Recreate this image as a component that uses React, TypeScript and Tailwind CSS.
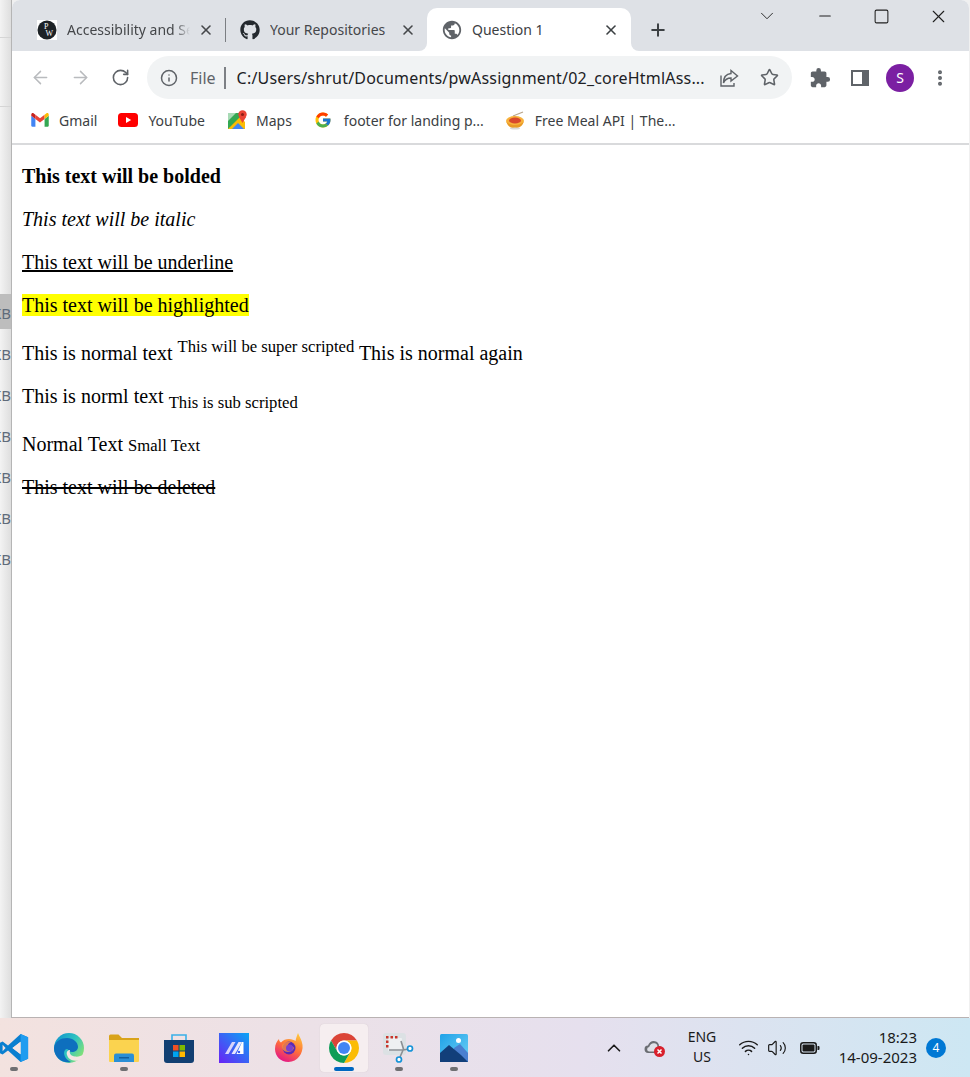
import { ArrowLeft, ArrowRight, ChevronDown, ChevronUp, Info, Minus, MoreVertical, Plus, RotateCw, Square, Star, Volume2, Wifi, X } from 'lucide-react';
import { FaGithub } from 'react-icons/fa';
import { FcGoogle } from 'react-icons/fc';
import { MdExtension, MdPublic } from 'react-icons/md';
import type { ReactNode } from 'react';

const UI_FONT = 'font-["Noto_Sans",sans-serif]';

function PwIcon() {
  return (
    <svg width="20" height="20" viewBox="0 0 20 20">
      <rect width="20" height="20" fill="#fff" />
      <circle cx="10" cy="10" r="9.5" fill="#1d2226" />
      <text x="7" y="9" fontSize="8" fill="#fff" fontFamily="Liberation Serif">P</text>
      <text x="8.5" y="16" fontSize="8" fill="#fff" fontFamily="Liberation Serif">W</text>
    </svg>
  );
}

function GmailIcon() {
  return (
    <svg width="20" height="20" viewBox="0 0 24 24">
      <path d="M1.5 20V7l5 3.8V20H3a1.5 1.5 0 0 1-1.5-1z" fill="#4285f4" />
      <path d="M17.5 20v-9.2l5-3.8v12a1 1 0 0 1-1 1z" fill="#34a853" />
      <path d="M6.5 10.8V5.6L12 10l5.500-4.400v5.200L12 15z" fill="#ea4335" />
      <path d="M17.500 5.600l2-1.500c1.400-1 3-.1 3 1.500V7l-5 3.800z" fill="#fbbc04" />
      <path d="M6.500 5.600l-2-1.500c-1.400-1-3-.1-3 1.500V7l5 3.800z" fill="#c5221f" />
    </svg>
  );
}

function YoutubeIcon() {
  return (
    <svg width="20" height="14" viewBox="0 0 20 14">
      <rect width="20" height="14" rx="3.500" fill="#f00" />
      <path d="M8 4l5.200 3L8 10z" fill="#fff" />
    </svg>
  );
}

function MapsIcon() {
  return (
    <svg width="19" height="20" viewBox="0 0 19 20">
      <path d="M0 3h12v16H0z" fill="#34a853" />
      <path d="M0 19L12 7l5 5v7z" fill="#fbbc04" />
      <path d="M4 19l6-6 6 6z" fill="#4285f4" />
      <path d="M0 3h8L0 11z" fill="#a8dab5" />
      <circle cx="14.500" cy="4.500" r="4.200" fill="#ea4335" />
      <path d="M11 7l3.500 6L18 7z" fill="#ea4335" />
      <circle cx="14.500" cy="4.500" r="1.500" fill="#8f1d15" />
    </svg>
  );
}

function MealIcon() {
  return (
    <svg width="20" height="20" viewBox="0 0 20 20">
      <path d="M8 6l10-4" stroke="#b9a58a" strokeWidth="1.200" fill="none" />
      <ellipse cx="10" cy="11" rx="9" ry="5" fill="#f7b23b" />
      <ellipse cx="10" cy="10.500" rx="6" ry="3" fill="#d9482b" />
      <path d="M1.500 12c1 4 4 6 8.500 6s7.500-2 8.500-6c-2 2-5 3-8.500 3s-6.500-1-8.500-3z" fill="#e99a25" />
      <ellipse cx="10" cy="18.500" rx="5" ry="1" fill="#d8d8d8" />
    </svg>
  );
}

function ShareIcon() {
  return (
    <svg width="20" height="20" viewBox="0 0 20 20" fill="none" stroke="#5f6368" strokeWidth="1.400">
      <path d="M2 7.500V18h13v-3" />
      <path d="M12 2.500l6.500 5.500L12 13v-3C8.500 10 6 11.500 4.500 15c0-5 2.500-9 7.500-9.500z" />
    </svg>
  );
}

function SidePanelIcon() {
  return (
    <svg width="18" height="18" viewBox="0 0 18 18">
      <path d="M0 1h18v16H0z" fill="#5f6368" />
      <path d="M2 3h9v12H2z" fill="#fff" />
    </svg>
  );
}

function VsCodeIcon() {
  return (
    <svg width="30" height="30" viewBox="0 0 100 100">
      <path fillRule="evenodd" d="M72 3L30 42 12 28 3 33v34l9 5 18-14 42 39 25-11V14zM72 29L45 50l27 21zM12 39l10 11-10 11z" fill="#0a7fd0" />
      <path d="M72 3l25 11v72L72 97z" fill="#1f9cf0" />
      <path d="M72 29v42L45 50z" fill="#f4e5e3" />
    </svg>
  );
}

function EdgeIcon() {
  return (
    <svg width="30" height="30" viewBox="0 0 30 30">
      <defs>
        <linearGradient id="edgeA" x1="0" y1="0" x2="1" y2="0.600">
          <stop offset="0" stopColor="#0c8fd0" />
          <stop offset="0.600" stopColor="#2fc3c0" />
          <stop offset="1" stopColor="#7fe07a" />
        </linearGradient>
      </defs>
      <circle cx="15" cy="15" r="15" fill="url(#edgeA)" />
      <path d="M0 15C1 8 7 5 13 5c6 0 11 4 11 9 0 3-3 5-6 5-4 0-3-3-5-3-4 0-5 9 4 13C8 31 0 24 0 15z" fill="#0e6fbe" />
      <path d="M16 17c-2 0-4 1.500-3 5 1 3.500 5 6.500 11 5.500 2-1 4-3 5-5.500-2 1-5 2-8 1.500-4-.5-6-3-5-6.500z" fill="#f4e5e3" />
    </svg>
  );
}

function ExplorerIcon() {
  return (
    <svg width="30" height="28" viewBox="0 0 30 28">
      <path d="M0 2a1.500 1.500 0 0 1 1.500-1.500h8L13 4h17v4H0z" fill="#d9a31a" />
      <path d="M0 6h30v21a1 1 0 0 1-1 1H1a1 1 0 0 1-1-1z" fill="#fbd34f" />
      <path d="M5 21.500a2 2 0 0 1 2-2h16a2 2 0 0 1 2 2V28H5z" fill="#2a8fd6" />
      <path d="M10 23h10v1.500H10z" fill="#125f9f" />
    </svg>
  );
}

function StoreIcon() {
  return (
    <svg width="30" height="30" viewBox="0 0 30 30">
      <path d="M8 7V2h14v5" fill="none" stroke="#3ab0e8" strokeWidth="1.600" />
      <path d="M0 7h30v20a3 3 0 0 1-3 3H3a3 3 0 0 1-3-3z" fill="#123f72" />
      <rect x="9" y="12" width="5.500" height="5.500" fill="#f25022" />
      <rect x="15.500" y="12" width="5.500" height="5.500" fill="#7fba00" />
      <rect x="9" y="18.500" width="5.500" height="5.500" fill="#00a4ef" />
      <rect x="15.500" y="18.500" width="5.500" height="5.500" fill="#ffb900" />
    </svg>
  );
}

function MaIcon() {
  return (
    <svg width="30" height="30" viewBox="0 0 30 30">
      <defs>
        <linearGradient id="maA" x1="0" y1="1" x2="1" y2="0">
          <stop offset="0" stopColor="#6a22f5" />
          <stop offset="1" stopColor="#0aa5f5" />
        </linearGradient>
      </defs>
      <rect width="30" height="30" fill="url(#maA)" />
      <path d="M6 21l7-12h3.500l-7 12z" fill="#d8d4fb" />
      <path d="M12.500 21l7-12h3.500l-7 12z" fill="#e8e6fd" />
      <path d="M17.500 21l5.500-12h1.500v12z" fill="#fff" />
      <circle cx="20" cy="19" r="1.200" fill="#3a5cf5" />
    </svg>
  );
}

function FirefoxIcon() {
  return (
    <svg width="30" height="30" viewBox="0 0 30 30">
      <defs>
        <linearGradient id="ffA" x1="0.800" y1="0" x2="0.300" y2="1">
          <stop offset="0" stopColor="#ffc93c" />
          <stop offset="0.500" stopColor="#ff7139" />
          <stop offset="1" stopColor="#e31587" />
        </linearGradient>
      </defs>
      <path d="M24 0c1 3 4 7 4.500 12 1 8-5 17-14 17C6.500 29 1 23 1 16 1 11 3 8 5 6c0 2 1 3 2 3.500C9 7 12 6 15 6c3 0 5 1 6.500 2 .5-3 1.500-5 2.500-8z" fill="url(#ffA)" />
      <circle cx="15" cy="15" r="6.500" fill="#5b2bb5" />
      <path d="M8 12c2-3 6-4 9-3-2 1-3 2-3 3 3 0 5 1 6 3-1 3-4 4-6 4-4 0-7-3-6-7z" fill="#ff8a3c" opacity="0.800" />
      <circle cx="15.500" cy="15" r="3.500" fill="#7b3fd0" />
    </svg>
  );
}

function ChromeIcon() {
  return (
    <svg width="30" height="30" viewBox="4 4 40 40">
      <path d="M6.680 14A20 20 0 0 1 41.320 14H24A10 10 0 0 0 15.340 29Z" fill="#db4437" />
      <path d="M41.320 14A20 20 0 0 1 24 44L32.660 29A10 10 0 0 0 24 14Z" fill="#fbbc05" />
      <path d="M24 44A20 20 0 0 1 6.680 14L15.340 29A10 10 0 0 0 32.660 29Z" fill="#0f9d58" />
      <circle cx="24" cy="24" r="10" fill="#fff" />
      <circle cx="24" cy="24" r="8" fill="#4285f4" />
    </svg>
  );
}

function SnipIcon() {
  return (
    <svg width="31" height="30" viewBox="0 0 31 30">
      <rect x="0" y="0" width="23" height="22" rx="3" fill="#dce1e4" />
      <rect x="5" y="5" width="14" height="13" rx="1" fill="#eef0f2" />
      <path d="M3 3h2.500v2.500H3zM7.500 3H10v2.500H7.500zM12 3h2.500v2.500H12zM3 7.500h2.500V10H3zM3 12h2.500v2.500H3z" fill="#c8352b" />
      <path d="M18 8l2.500 8 -3.500 8M6 17h14l6 -1" fill="none" stroke="#8a8f94" strokeWidth="1.600" />
      <circle cx="27" cy="15.500" r="2.500" fill="#fff" stroke="#1593d8" strokeWidth="1.700" />
      <circle cx="16" cy="26.500" r="2.500" fill="#fff" stroke="#1593d8" strokeWidth="1.700" />
    </svg>
  );
}

function PhotosIcon() {
  return (
    <svg width="28" height="28" viewBox="0 0 28 28">
      <defs>
        <linearGradient id="phA" x1="0" y1="0" x2="1" y2="1">
          <stop offset="0" stopColor="#1fa2e8" />
          <stop offset="1" stopColor="#6fd0f5" />
        </linearGradient>
      </defs>
      <rect width="28" height="28" rx="1.500" fill="url(#phA)" />
      <circle cx="18.500" cy="6.500" r="2.500" fill="#fff" />
      <path d="M14 14l6-4 8 9v9H14z" fill="#4a7fd0" />
      <path d="M0 19l9-8 12 10 7 7H0z" fill="#123f7a" />
    </svg>
  );
}

function CloudErrorIcon() {
  return (
    <svg width="22" height="20" viewBox="0 0 22 20">
      <path d="M4.500 15A3.700 3.700 0 0 1 4 7.600C5 3.500 9 2 12 3.500c2 1 3 2.500 3 4.500 2 0 3 1 3.500 2L14 15z" fill="#6b6e73" />
      <path d="M5.500 13.500a2.200 2.200 0 0 1-.3-4.400C6 5.500 9 4.500 11.500 5.500c1.300.6 2 1.700 2 3.500l-3 4.500z" fill="#dfe1e8" />
      <circle cx="15.500" cy="13.500" r="5.500" fill="#d9202c" />
      <path d="M13.500 11.500l4 4m0-4l-4 4" stroke="#fff" strokeWidth="1.500" />
    </svg>
  );
}

function BatteryIcon() {
  return (
    <svg width="20" height="12" viewBox="0 0 20 12" fill="none">
      <rect x="0.750" y="0.750" width="15.500" height="10.500" rx="2.500" stroke="#1a1a1a" strokeWidth="1.500" />
      <rect x="2.500" y="2.500" width="12" height="7" rx="1" fill="#1a1a1a" />
      <path d="M17.500 4h1a1 1 0 0 1 1 1v2a1 1 0 0 1-1 1h-1z" fill="#1a1a1a" />
    </svg>
  );
}

function Tab({ icon, title, close, className, textClass = '' }: { icon: ReactNode; title: string; close: string; className: string; textClass?: string }) {
  return (
    <div className={`flex h-[43px] shrink-0 items-center ${className}`}>
      <span className="flex shrink-0 items-center justify-center">{icon}</span>
      <span className={`min-w-0 flex-1 overflow-hidden whitespace-nowrap text-[14px] ${textClass}`}>{title}</span>
      <X size={16} strokeWidth={2.400} className={`shrink-0 ${close}`} />
    </div>
  );
}

function Bookmark({ icon, label, className }: { icon: ReactNode; label: string; className: string }) {
  return (
    <div className={`flex items-center whitespace-nowrap text-[14px] text-[#3c4043] ${className}`}>
      {icon}
      <span>{label}</span>
    </div>
  );
}

function ToolButton({ children }: { children: ReactNode }) {
  return <div className="flex h-[43px] w-10 shrink-0 items-center justify-center">{children}</div>;
}

function TaskbarItem({ children, dot, active }: { children: ReactNode; dot?: boolean; active?: boolean }) {
  return (
    <div className="flex h-[59px] w-[55px] shrink-0 flex-col items-center justify-center">
      <div className={`flex h-[48px] w-[48px] flex-col items-center rounded-[4px] pt-[9px] ${active ? 'bg-[#f6eef0] shadow-[0_0_1px_#cbbfc4]' : ''}`}>
        <div className="flex h-[30px] items-center justify-center">{children}</div>
        {active && <div className="mt-[4px] h-[4px] w-[20px] rounded-full bg-[#0067c0]" />}
        {dot && <div className="mt-[4px] h-[4px] w-[8px] rounded-full bg-[#6f6f72]" />}
      </div>
    </div>
  );
}

export default function App() {
  return (
    <div className={`flex h-[1077px] w-[970px] flex-col overflow-hidden bg-[#f0f0f0] ${UI_FONT}`}>
      <div className="flex h-[1018px] shrink-0">
        {/* sliver of the window behind */}
        <div className="flex w-[12px] shrink-0 flex-col overflow-hidden border-r border-[#b5b5b5] bg-gradient-to-r from-[#f3f3f3] to-[#dedede] text-[15px] text-[#5f6b7a]">
          <div className="h-[38px] shrink-0 border-b border-[#d5d5d5]" />
          <div className="h-[69px] shrink-0 border-b border-[#d5d5d5]" />
          <div className="h-[187px] shrink-0" />
          <div className="flex h-[35px] shrink-0 items-center justify-end bg-[#bdbdbd] pt-[3px]">
            <span className="shrink-0">KB</span>
          </div>
          <div className="mt-[5px]">
            {[0, 1, 2, 3, 4, 5].map((i) => (
              <div key={i} className="flex h-[41px] items-center justify-end">
                <span className="shrink-0">KB</span>
              </div>
            ))}
          </div>
        </div>

        <div className="flex w-[957px] shrink-0 flex-col overflow-hidden rounded-tl-lg rounded-tr-lg border-b border-[#b9b2b2] bg-white">
          {/* tab strip */}
          <div className="flex h-[51px] shrink-0 items-end bg-[#dee1e6] text-[#45474a]">
            <Tab
              icon={<PwIcon />}
              title="Accessibility and Security"
              close="mr-[11px]"
              textClass="[mask-image:linear-gradient(to_right,black_88%,transparent)]"
              className="ml-[17px] w-[196px] gap-[8px] pl-[8px] [&>span:first-child]:mr-[2px]"
            />
            <div className="mb-[9px] h-[24px] w-px shrink-0 bg-[#7b7e82]" />
            <Tab
              icon={<FaGithub size={20} className="text-[#24292e]" />}
              title="Your Repositories"
              close="mr-[11px]"
              className="w-[201px] gap-[10px] pl-[14px]"
            />
            <div className="relative flex h-[43px] w-[204px] shrink-0 items-center gap-[9px] rounded-t-[10px] bg-white pl-[14px] text-[#3c4043]">
              <MdPublic size={22} className="shrink-0 text-[#5f6368]" />
              <span className="flex-1 whitespace-nowrap text-[14px]">Question 1</span>
              <X size={16} strokeWidth={2.400} className="mr-[12px] shrink-0" />
              <div className="absolute bottom-0 -left-[8px] h-[8px] w-[8px] bg-white">
                <div className="h-full w-full rounded-br-[8px] bg-[#dee1e6]" />
              </div>
              <div className="absolute bottom-0 -right-[8px] h-[8px] w-[8px] bg-white">
                <div className="h-full w-full rounded-bl-[8px] bg-[#dee1e6]" />
              </div>
            </div>
            <div className="ml-[17px] flex h-[43px] items-center">
              <Plus size={20} strokeWidth={2.400} className="text-[#3c4043]" />
            </div>
            <div className="mr-[2px] ml-auto flex h-[32px] self-start text-[#202020]">
              <div className="mr-[2px] flex w-[55px] items-center justify-center"><ChevronDown size={22} strokeWidth={1} /></div>
              <div className="flex w-[57px] items-center justify-center"><Minus size={18} strokeWidth={1.500} /></div>
              <div className="flex w-[57px] items-center justify-center"><Square size={17} strokeWidth={1.500} /></div>
              <div className="flex w-[57px] items-center justify-center"><X size={21} strokeWidth={1.300} /></div>
            </div>
          </div>

          {/* toolbar */}
          <div className="flex h-[49px] shrink-0 items-start bg-white pt-[5px] text-[#5f6368]">
            <div className="ml-[8px] flex">
              <ToolButton><ArrowLeft size={21} strokeWidth={1.700} className="text-[#b9bbbe]" /></ToolButton>
              <ToolButton><ArrowRight size={21} strokeWidth={1.700} className="text-[#b9bbbe]" /></ToolButton>
              <ToolButton><RotateCw size={19} strokeWidth={2} className="text-[#5f6368]" /></ToolButton>
            </div>
            <div className="ml-[7px] flex h-[43px] w-[645px] shrink-0 items-center rounded-full bg-[#f1f3f4] pr-[3px] pl-[13px]">
              <Info size={18} strokeWidth={2} className="shrink-0" />
              <span className="ml-[12px] text-[16px] text-[#5f6368]">File</span>
              <div className="ml-[8px] h-[22px] w-[2px] shrink-0 bg-[#7d8085]" />
              <span className="ml-[11px] w-[470px] shrink-0 whitespace-nowrap text-[16px] tracking-[0.2px] text-[#202124]">C:/Users/shrut/Documents/pwAssignment/02_coreHtmlAss...</span>
              <div className="ml-auto flex">
                <ToolButton><ShareIcon /></ToolButton>
                <ToolButton><Star size={19} strokeWidth={2} /></ToolButton>
              </div>
            </div>
            <div className="ml-[8px] flex">
              <ToolButton><MdExtension size={22} /></ToolButton>
              <ToolButton><SidePanelIcon /></ToolButton>
              <ToolButton>
                <div className="flex h-[28px] w-[28px] items-center justify-center rounded-full bg-[#7b1fa2] text-[14px] text-white">S</div>
              </ToolButton>
              <ToolButton><MoreVertical size={20} strokeWidth={2.800} /></ToolButton>
            </div>
          </div>

          {/* bookmarks */}
          <div className="flex h-[45px] shrink-0 items-center border-b-2 border-[#d9dadc] bg-white pb-[3px]">
            <Bookmark icon={<GmailIcon />} label="Gmail" className="ml-[18px] gap-[9px]" />
            <Bookmark icon={<YoutubeIcon />} label="YouTube" className="ml-[21px] gap-[10px]" />
            <Bookmark icon={<MapsIcon />} label="Maps" className="ml-[23px] gap-[9px]" />
            <Bookmark icon={<FcGoogle size={18} />} label="footer for landing p..." className="ml-[22px] gap-[12px]" />
            <Bookmark icon={<MealIcon />} label="Free Meal API | The..." className="ml-[21px] gap-[10px]" />
          </div>

          {/* page content */}
          <div className='min-h-0 flex-1 bg-white pl-[10px] font-["Liberation_Serif",serif] text-[20px] leading-[normal] text-black'>
            <p className="mt-[20px]"><b className="font-bold">This text will be bolded</b></p>
            <p className="mt-[20px]"><i>This text will be italic</i></p>
            <p className="mt-[20px]"><u>This text will be underline</u></p>
            <p className="mt-[20px]"><mark className="bg-[#ffff00] text-black">This text will be highlighted</mark></p>
            <p className="mt-[25px]">This is normal text <sup className="top-0 align-super text-[16.67px]">This will be super scripted</sup> This is normal again</p>
            <p className="mt-[20px]">This is norml text <sub className="bottom-0 align-sub text-[16.67px]">This is sub scripted</sub></p>
            <p className="mt-[25px]">Normal Text <small className="text-[16.67px]">Small Text</small></p>
            <p className="mt-[20px]"><del>This text will be deleted</del></p>
          </div>
        </div>
      </div>

      {/* taskbar */}
      <div className="flex h-[59px] shrink-0 items-center bg-gradient-to-r from-[#f3e2df] via-[#e6e0ee] via-60% to-[#cde7f3] text-[#1a1a1a]">
        <div className="-ml-[14px] flex shrink-0">
          <TaskbarItem dot><VsCodeIcon /></TaskbarItem>
          <TaskbarItem><EdgeIcon /></TaskbarItem>
          <TaskbarItem dot><ExplorerIcon /></TaskbarItem>
          <TaskbarItem><StoreIcon /></TaskbarItem>
          <TaskbarItem><MaIcon /></TaskbarItem>
          <TaskbarItem><FirefoxIcon /></TaskbarItem>
          <TaskbarItem active><ChromeIcon /></TaskbarItem>
          <TaskbarItem dot><SnipIcon /></TaskbarItem>
          <TaskbarItem dot><PhotosIcon /></TaskbarItem>
        </div>
        <ChevronUp size={22} strokeWidth={1.800} className="ml-[122px] shrink-0" />
        <div className="ml-[19px] shrink-0"><CloudErrorIcon /></div>
        <div className="mb-[2px] ml-[11px] flex w-[50px] shrink-0 flex-col items-center text-[14px] leading-[20px]">
          <span>ENG</span>
          <span>US</span>
        </div>
        <Wifi size={21} strokeWidth={1.700} className="ml-[11px] shrink-0" />
        <Volume2 size={20} strokeWidth={1.400} className="ml-[8px] shrink-0" />
        <div className="ml-[13px] shrink-0"><BatteryIcon /></div>
        <div className="mb-[2px] ml-[19px] flex w-[78px] shrink-0 flex-col items-end whitespace-nowrap text-[15px] leading-[20px]">
          <span>18:23</span>
          <span>14-09-2023</span>
        </div>
        <div className="ml-[9px] flex h-[20px] w-[20px] shrink-0 items-center justify-center rounded-full bg-[#0078d4] text-[12px] text-white">4</div>
      </div>
    </div>
  );
}
